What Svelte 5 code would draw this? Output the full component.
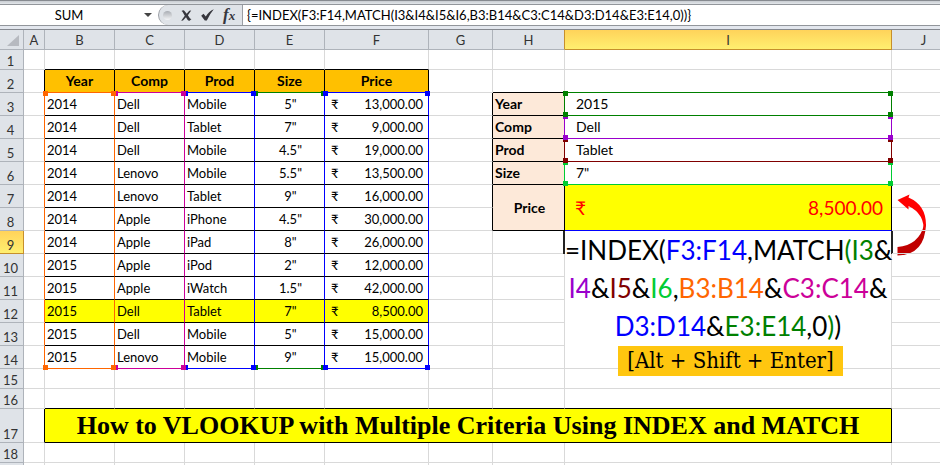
<script>
	const letters = ['A', 'B', 'C', 'D', 'E', 'F', 'G', 'H', 'I', 'J'];
	const fields = ['Year', 'Comp', 'Prod', 'Size', 'Price'];

	// range colour of each column of the data table
	const ranges = ['orange', 'magenta', 'blue', 'green', 'blue'];
	// colour of the line at the right of each column
	const edges = ['orange', 'magenta', 'blue', 'blue', 'blue'];

	const records = [
		['2014', 'Dell', 'Mobile', '5"', '13,000.00'],
		['2014', 'Dell', 'Tablet', '7"', '9,000.00'],
		['2014', 'Dell', 'Mobile', '4.5"', '19,000.00'],
		['2014', 'Lenovo', 'Mobile', '5.5"', '13,500.00'],
		['2014', 'Lenovo', 'Tablet', '9"', '16,000.00'],
		['2014', 'Apple', 'iPhone', '4.5"', '30,000.00'],
		['2014', 'Apple', 'iPad', '8"', '26,000.00'],
		['2015', 'Apple', 'iPod', '2"', '12,000.00'],
		['2015', 'Apple', 'iWatch', '1.5"', '42,000.00'],
		['2015', 'Dell', 'Tablet', '7"', '8,500.00'],
		['2015', 'Dell', 'Mobile', '5"', '15,000.00'],
		['2015', 'Lenovo', 'Mobile', '9"', '15,000.00']
	];

	const criteria = [
		{ label: 'Year', value: '2015', color: 'green' },
		{ label: 'Comp', value: 'Dell', color: 'purple' },
		{ label: 'Prod', value: 'Tablet', color: 'maroon' },
		{ label: 'Size', value: '7"', color: 'lime' }
	];

	const formulaLines = [
		[['=INDEX(', ''], ['F3:F14', 'blue'], [',MATCH', ''], ['(I3', 'green'], ['&', '']],
		[['I4', 'purple'], ['&', ''], ['I5', 'maroon'], ['&', ''], ['I6', 'lime'], [',', ''], ['B3:B14', 'orange'], ['&', ''], ['C3:C14', 'magenta'], ['&', '']],
		[['D3:D14', 'blue'], ['&', ''], ['E3:E14', 'green'], [',0', ''], [')', 'green'], [')', '']]
	];

	let nameBox = $state('SUM');
	let formula = $state('{=INDEX(F3:F14,MATCH(I3&I4&I5&I6,B3:B14&C3:C14&D3:D14&E3:E14,0))}');
	const last = records.length - 1;
</script>

{#snippet blanks(count)}
	{#each Array(count) as _}
		<td></td>
	{/each}
{/snippet}

<div class="excel">
	<div class="formula-bar">
		<input class="name-box" aria-label="Name box" bind:value={nameBox} />
		<button class="drop" aria-label="Show names">
			<svg width="8" height="4" viewBox="0 0 8 4"><path d="M0 0h8L4 4z" fill="#444" /></svg>
		</button>
		<div class="tools">
			<span class="knob"></span>
			<button aria-label="Cancel">
				<svg width="11" height="11" viewBox="0 0 11 11">
					<path d="M.5 1Q2.600-.5 3.700 1.200L5.700 3.700 8.300.8 10.200.5 6.900 5.300 8.700 8Q9.400 9 10.500 8.900L8.600 10.700Q7 10.700 6.300 9.500L5 7.300 2 10.600.2 10.700 3.800 5.700 2.200 3Q1.700 1.600.5 1z" fill="#36363d" />
				</svg>
			</button>
			<button aria-label="Enter">
				<svg width="13" height="12" viewBox="0 0 13 12">
					<path d="M.2 6.800L2.500 4.800 4.800 7.500Q7.500 2.500 12.800.3 8.800 5 5.800 11.500L3.800 11.500z" fill="#36363d" />
				</svg>
			</button>
			<button class="fx" aria-label="Insert function">f<small>x</small></button>
		</div>
		<input class="formula-input" aria-label="Formula" bind:value={formula} />
	</div>

	<div class="sheet">
		<table>
			<colgroup>
				<col class="w-row" />
				<col class="w-a" />
				<col class="w-data" />
				<col class="w-data" />
				<col class="w-data" />
				<col class="w-data" />
				<col class="w-price" />
				<col class="w-gap" />
				<col class="w-label" />
				<col class="w-value" />
				<col class="w-gap" />
			</colgroup>
			<thead>
				<tr class="short">
					<th class="corner"><svg width="12" height="11" viewBox="0 0 12 11"><path d="M12 0v11H0z" fill="#b7bac0" /></svg></th>
					{#each letters as letter}
						<th class="col-head" class:active={letter === 'I'} class:before-active={letter === 'H'}>{letter}</th>
					{/each}
				</tr>
			</thead>
			<tbody>
				<tr class="short">
					<th class="row-head">1</th>
					<td></td>
					{#each fields as _}
						<td class="line-below"></td>
					{/each}
					{@render blanks(4)}
				</tr>
				<tr>
					<th class="row-head">2</th>
					<td class="line-right"></td>
					{#each fields as field, c}
						<td class="field bottom-{ranges[c]}">{field}</td>
					{/each}
					<td></td>
					<td class="line-below"></td>
					<td class="bottom-green"></td>
					<td></td>
				</tr>
				{#each records as record, r}
					<tr>
						<th class="row-head" class:active={r === 6}>{r + 3}</th>
						<td class="right-orange"></td>
						{#each record as text, c}
							<td
								class="cell right-{edges[c]} {r === last ? 'bottom-' + ranges[c] : ''}"
								class:center={c === 3}
								class:found={r === 9}
							>
								{#if c === 4}
									<div class="money"><span>₹</span><span>{text}</span></div>
								{:else}
									{text}
								{/if}
								{#if r === 0}
									<i class="handle top left {ranges[c]} level{c}"></i>
									<i class="handle top right {ranges[c]} level{c}"></i>
								{/if}
								{#if r === last}
									<i class="handle bottom left {ranges[c]} level{c}"></i>
									<i class="handle bottom right {ranges[c]} level{c}"></i>
								{/if}
							</td>
						{/each}

						{#if r < 4}
							<td class="line-right"></td>
							<td class="label right-{criteria[r].color}">{criteria[r].label}</td>
							<td class="value right-{criteria[r].color} bottom-{criteria[r].color}">
								{criteria[r].value}
								{#each ['top left', 'top right', 'bottom left', 'bottom right'] as corner}
									<i class="handle {corner} {criteria[r].color} level{r}"></i>
								{/each}
							</td>
						{:else if r === 4}
							<td class="line-right"></td>
							<td class="label center" rowspan="2">Price</td>
							<td class="result" rowspan="2">
								<div class="money"><span>₹</span><span>8,500.00</span></div>
							</td>
						{:else if r === 5}
							<td class="line-right"></td>
						{:else if r === 6}
							{@render blanks(2)}
							<td class="editing" rowspan="5">
								{#each formulaLines as line}
									<div class="formula-line">{#each line as [part, color]}<span class={color}>{part}</span>{/each}</div>
								{/each}
							</td>
						{:else if r === last}
							{@render blanks(2)}
							<td class="hint-cell"><span class="hint">[Alt + Shift + Enter]</span></td>
						{:else}
							{@render blanks(2)}
						{/if}

						{#if r === 4}
							<td class="arrow-cell">
								<svg class="arrow" width="30" height="62" viewBox="0 0 30 62">
									<path d="M.5 53Q22 51 27 31L29 30Q28 61 .5 61.500z" fill="#c00000" />
									<path d="M.5 6L12.500.5 11.500 3.500Q29 11 29 31L26.500 38Q28 20 11.500 12V15.500z" fill="#f00" />
								</svg>
							</td>
						{:else}
							<td></td>
						{/if}
					</tr>
				{/each}
				<tr class="short">
					<th class="row-head">15</th>
					{@render blanks(10)}
				</tr>
				<tr class="short">
					<th class="row-head">16</th>
					<td></td>
					{#each Array(8) as _}
						<td class="line-below"></td>
					{/each}
					<td></td>
				</tr>
				<tr class="tall">
					<th class="row-head">17</th>
					<td class="line-right"></td>
					<td class="title" colspan="8">How to VLOOKUP with Multiple Criteria Using INDEX and MATCH</td>
					<td></td>
				</tr>
				<tr class="short">
					<th class="row-head">18</th>
					{@render blanks(10)}
				</tr>
				<tr class="short">
					<th class="row-head"></th>
					{@render blanks(10)}
				</tr>
			</tbody>
		</table>
	</div>
</div>

<style>
	:global(body) {
		margin: 0;
		background: #fff;
	}

	.excel {
		display: flex;
		flex-direction: column;
		height: 100vh;
		overflow: hidden;
		font-family: Lato, 'Open Sans', sans-serif;
		font-size: 13px;
		line-height: 16px;
		color: #000;
	}

	/* Formula bar */
	.formula-bar {
		display: flex;
		flex: none;
		height: 20px;
		padding: 5px 0 0;
		background: linear-gradient(#868a90 1px, #c8ccd1 1px, #e2e6ea 4px, #92969b 4px, #92969b 5px, #fff 5px);
		border-bottom: 1px solid #92969b;
		box-shadow: 0 3px #e3e7ee;
		margin-bottom: 3px;
	}

	input {
		min-width: 0;
		padding: 0;
		border: 0;
		background: #fff;
		font: inherit;
		color: inherit;
		outline: none;
	}

	button {
		display: flex;
		align-items: center;
		justify-content: center;
		padding: 0;
		border: 0;
		background: none;
	}

	.name-box {
		width: 138px;
		text-align: center;
	}

	.drop {
		width: 20px;
	}

	.tools {
		display: flex;
		align-items: center;
		gap: 9px;
		box-sizing: border-box;
		width: 85px;
		padding-left: 4px;
		background: #dfe3e8;
		border-left: 1px solid #9a9ea4;
		border-right: 1px solid #9a9ea4;
		border-radius: 10px 0 0 10px;
	}

	.knob {
		width: 9px;
		height: 9px;
		border-radius: 50%;
		background: linear-gradient(#a9adb3, #f4f5f7);
	}

	.fx {
		font: italic bold 17px/16px 'Liberation Serif', serif;
		color: #36363d;
	}

	.fx small {
		font-size: 13px;
		padding-top: 2px;
	}

	.formula-input {
		flex: 1;
		padding-left: 4px;
	}

	/* Grid */
	.sheet {
		flex: 1;
		overflow: hidden;
		border-top: 1px solid #858990;
	}

	table {
		width: 956px;
		table-layout: fixed;
		border-collapse: separate;
		border-spacing: 0;
	}

	.w-row {
		width: 24px;
	}

	.w-a {
		width: 21px;
	}

	.w-data {
		width: 70px;
	}

	.w-price {
		width: 104px;
	}

	.w-gap {
		width: 64px;
	}

	.w-label {
		width: 72px;
	}

	.w-value {
		width: 327px;
	}

	tr {
		height: 23px;
	}

	.short {
		height: 20px;
	}

	.tall {
		height: 34px;
	}

	th,
	td {
		position: relative;
		box-sizing: border-box;
		padding: 0;
		border: 0 solid #d9d9d9;
		border-width: 0 1px 1px 0;
		white-space: nowrap;
	}

	th {
		background: #dfe3e8;
		border-color: #aeb3ba;
		color: #333;
		font-weight: 400;
	}

	.corner {
		text-align: right;
		padding-right: 4px;
		line-height: 11px;
	}

	.corner svg {
		vertical-align: middle;
	}

	.row-head {
		vertical-align: bottom;
		padding-right: 2px;
	}

	.active {
		background: linear-gradient(#ffd35a, #ffef70);
		border-color: #c68f2c;
	}

	.before-active {
		border-right-color: #c68f2c;
	}

	.field {
		background: #ffc000;
		border-right-color: #000;
		font-size: 14px;
		font-weight: 700;
		text-align: center;
	}

	.cell {
		padding-left: 2px;
		border-bottom-color: #000;
	}

	.center {
		text-align: center;
	}

	.found {
		background: #ff0;
	}

	.money {
		display: flex;
		justify-content: space-between;
		padding: 0 5px 0 4px;
	}

	.label {
		padding-left: 2px;
		background: #fde9d9;
		border-color: #000;
		font-size: 14px;
		font-weight: 700;
	}

	.value {
		padding-left: 11px;
		font-size: 14px;
	}

	.result {
		background: #ff0;
		border-right-color: #000;
		border-bottom-color: #00f;
		color: #f00;
		font-size: 19px;
		line-height: 24px;
	}

	.result .money {
		padding: 0 8px 0 10px;
	}

	.editing {
		text-align: center;
		vertical-align: top;
		border-bottom: 0;
	}

	.editing::before,
	.editing::after {
		content: '';
		position: absolute;
		top: 0;
		left: -2px;
		width: 2px;
		height: 23px;
		background: #222;
	}

	.editing::after {
		left: auto;
		right: -2px;
	}

	.formula-line {
		font-size: 26px;
		line-height: 38px;
	}

	.hint {
		position: absolute;
		z-index: 2;
		top: 0;
		left: 53px;
		width: 225px;
		background: #ffc60f;
		font: 22px/30px 'DejaVu Serif Condensed', 'DejaVu Serif', serif;
		text-align: center;
	}

	.arrow {
		position: absolute;
		left: 5px;
		top: 9px;
	}

	.title {
		background: #ff0;
		border-color: #000;
		font: bold 26px/32px 'Liberation Serif', serif;
		text-align: center;
	}

	.line-right {
		border-right-color: #000;
	}

	.line-below {
		border-bottom-color: #000;
	}

	/* Range outlines and their corner handles */
	.handle {
		position: absolute;
		z-index: 1;
		width: 5px;
		height: 5px;
		background: currentColor;
	}

	.top {
		top: -2px;
	}

	.bottom {
		bottom: -2px;
	}

	.left {
		left: -2px;
	}

	.right {
		right: -2px;
	}

	.level0 {
		z-index: 6;
	}

	.level1 {
		z-index: 5;
	}

	.level2,
	.level4 {
		z-index: 4;
	}

	.orange {
		color: #ff6600;
	}

	.magenta {
		color: #cc0099;
	}

	.blue {
		color: #0000ff;
	}

	.green {
		color: #008000;
	}

	.purple {
		color: #9900cc;
	}

	.maroon {
		color: #800000;
	}

	.lime {
		color: #00cc33;
	}

	.right-orange {
		border-right-color: #ff6600;
	}

	.right-magenta {
		border-right-color: #cc0099;
	}

	.right-blue {
		border-right-color: #0000ff;
	}

	.right-green {
		border-right-color: #008000;
	}

	.right-purple {
		border-right-color: #9900cc;
	}

	.right-maroon {
		border-right-color: #800000;
	}

	.right-lime {
		border-right-color: #00cc33;
	}

	.bottom-orange {
		border-bottom-color: #ff6600;
	}

	.bottom-magenta {
		border-bottom-color: #cc0099;
	}

	.bottom-blue {
		border-bottom-color: #0000ff;
	}

	.bottom-green {
		border-bottom-color: #008000;
	}

	.bottom-purple {
		border-bottom-color: #9900cc;
	}

	.bottom-maroon {
		border-bottom-color: #800000;
	}

	.bottom-lime {
		border-bottom-color: #00cc33;
	}
</style>
